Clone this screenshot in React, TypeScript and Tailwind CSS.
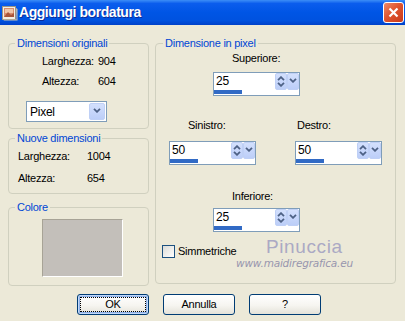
import React from "react";

function Chevron({ up = false }: { up?: boolean }) {
  return (
    <svg width="8" height="5" viewBox="0 0 8 5" className="block">
      <path
        d={up ? "M1 4.2 L4 1.2 L7 4.2" : "M1 0.8 L4 3.8 L7 0.8"}
        fill="none"
        stroke="#4D6185"
        strokeWidth="1.8"
      />
    </svg>
  );
}

function ArrowButton({ double = false, className = "" }: { double?: boolean; className?: string }) {
  return (
    <div
      className={`flex flex-col items-center rounded-[2px] border border-[#BFD0F6] bg-[linear-gradient(180deg,#D3E0FD_0%,#BCCEF8_100%)] ${
        double ? "justify-between py-[2px]" : "justify-center pb-[2px]"
      } ${className}`}
    >
      {double ? (
        <>
          <Chevron up />
          <Chevron />
        </>
      ) : (
        <Chevron />
      )}
    </div>
  );
}

function SpinField({ value }: { value: string }) {
  return (
    <div className="flex h-[24px] w-[87px] flex-col border border-[#7F9DB9] bg-white">
      <div className="flex h-[17px]">
        <span className="flex-1 pl-[2px] text-[12px] leading-[17px]">{value}</span>
        <ArrowButton double className="h-[17px] w-[12px]" />
        <ArrowButton className="h-[17px] w-[12px]" />
      </div>
      <div className="h-[5px]">
        <div className="h-[4px] w-[28px] bg-[#316AC5]" />
      </div>
    </div>
  );
}

function XpButton({ label, isDefault = false }: { label: string; isDefault?: boolean }) {
  return (
    <button
      type="button"
      className={`h-[21px] w-[72px] rounded-[3px] border border-[#003C74] bg-[linear-gradient(180deg,#FFFFFF_0%,#F6F5F0_55%,#E4E2D9_100%)] text-[11px] leading-[19px] ${
        isDefault
          ? "shadow-[inset_0_0_0_1px_#C2D8F8,inset_0_0_0_2px_#8DB0E8] outline-1 outline-offset-[-4px] outline-dotted outline-black"
          : ""
      }`}
    >
      {label}
    </button>
  );
}

const groupBox = "rounded-[4px] border border-[#D0D0BF]";
const legendText = "px-[2px] leading-[13px] text-[#0046D5]";

export default function App() {
  return (
    <div className="relative h-[321px] w-[405px] overflow-hidden bg-[#ECE9D8] font-['Liberation_Sans',Arial,sans-serif] text-[11px] tracking-[-0.25px] text-black">
      {/* title bar */}
      <div className="flex h-[25px] items-center bg-[linear-gradient(180deg,#3C8EF7_0%,#0B5DED_14%,#0055E5_50%,#0052DF_82%,#0041C9_100%)] pl-[2px] pr-[1px]">
        <svg width="16" height="16" viewBox="0 0 16 16" className="shrink-0">
          <rect x="0.5" y="1.5" width="13" height="13" fill="#F2EEE4" stroke="#9C9484" />
          <rect x="2" y="3" width="10" height="9" fill="#D98C6C" />
          <rect x="3" y="4" width="8" height="4" fill="#F0C6A8" />
          <path d="M2 12 L6 7 L9 10 L12 8 L12 12 Z" fill="#A9553A" />
          <path d="M14 3 L15.5 4 L15.5 15.5 L2 15.5 L1 14.5 L14.5 14.5 Z" fill="#C8C2B4" />
        </svg>
        <span className="ml-[1px] flex-1 text-[14px] font-bold tracking-[-0.45px] text-white [text-shadow:1px_1px_0_#0A2C9A]">
          Aggiungi bordatura
        </span>
        <div className="flex h-[21px] w-[21px] items-center justify-center rounded-[3px] border border-white bg-[linear-gradient(135deg,#EE8A6A_0%,#E0552F_45%,#C8391A_100%)]">
          <svg width="11" height="11" viewBox="0 0 11 11">
            <path d="M1.5 1.5 L9.5 9.5 M9.5 1.5 L1.5 9.5" stroke="white" strokeWidth="2.2" />
          </svg>
        </div>
      </div>

      {/* body */}
      <div className="flex pl-[8px] pt-[12px]">
        <div className="flex w-[141px] flex-col">
          <fieldset className={`${groupBox} h-[92px]`}>
            <legend className={`ml-[6px] ${legendText}`}>Dimensioni originali</legend>
            <div className="mt-[5px] pl-[33px]">
              <div className="flex h-[20px] leading-[13px]">
                <span className="w-[56px]">Larghezza:</span>
                <span>904</span>
              </div>
              <div className="flex h-[20px] leading-[13px]">
                <span className="w-[56px]">Altezza:</span>
                <span>604</span>
              </div>
            </div>
            <div className="ml-[17px] mt-[6px] flex h-[21px] w-[81px] items-center border border-[#7F9DB9] bg-white pr-[1px]">
              <span className="flex-1 pl-[3px] text-[12px]">Pixel</span>
              <ArrowButton className="h-[17px] w-[16px]" />
            </div>
          </fieldset>

          <fieldset className={`${groupBox} mt-[3px] h-[62px]`}>
            <legend className={`ml-[6px] ${legendText}`}>Nuove dimensioni</legend>
            <div className="mt-[5px] pl-[9px]">
              <div className="flex h-[22px] leading-[13px]">
                <span className="w-[69px]">Larghezza:</span>
                <span>1004</span>
              </div>
              <div className="flex h-[22px] leading-[13px]">
                <span className="w-[69px]">Altezza:</span>
                <span>654</span>
              </div>
            </div>
          </fieldset>

          <fieldset className={`${groupBox} mt-[7px] h-[85px]`}>
            <legend className={`ml-[6px] ${legendText}`}>Colore</legend>
            <div className="ml-[33px] mt-[5px] h-[58px] w-[81px] border border-b-white border-l-[#A7A396] border-r-white border-t-[#A7A396] bg-[#C3BFBA]" />
          </fieldset>
        </div>

        <fieldset className={`${groupBox} ml-[6px] h-[247px] w-[241px]`}>
          <legend className={`ml-[7px] ${legendText}`}>Dimensione in pixel</legend>
          <div className="ml-[76px] mt-[2px] leading-[13px]">Superiore:</div>
          <div className="ml-[57px] mt-[7px]">
            <SpinField value="25" />
          </div>

          <div className="ml-[13px] mt-[23px] flex gap-[39px]">
            <div className="flex flex-col">
              <span className="ml-[19px] leading-[13px]">Sinistro:</span>
              <div className="mt-[9px]">
                <SpinField value="50" />
              </div>
            </div>
            <div className="flex flex-col">
              <span className="ml-[2px] leading-[13px]">Destro:</span>
              <div className="mt-[9px]">
                <SpinField value="50" />
              </div>
            </div>
          </div>

          <div className="ml-[76px] mt-[25px] leading-[13px]">Inferiore:</div>
          <div className="ml-[57px] mt-[5px]">
            <SpinField value="25" />
          </div>

          <label className="ml-[6px] mt-[13px] flex items-center gap-[3px]">
            <span className="h-[13px] w-[13px] border border-[#1C5180] bg-[linear-gradient(135deg,#DCDCD7_0%,#FFFFFF_100%)]" />
            <span className="leading-[13px]">Simmetriche</span>
          </label>
        </fieldset>
      </div>

      {/* buttons */}
      <div className="mt-[8px] flex gap-[14px] pl-[77px]">
        <XpButton label="OK" isDefault />
        <XpButton label="Annulla" />
        <XpButton label="?" />
      </div>

      {/* watermark */}
      <div className="absolute left-[266px] top-[233px] text-[19px] tracking-[0.6px] text-[#ABA9C4]">
        Pinuccia
      </div>
      <div className="absolute left-[236px] top-[256px] font-['DejaVu_Sans',sans-serif] text-[10.5px] italic tracking-[-0.2px] text-[#9896AE]">
        www.maidiregrafica.eu
      </div>
    </div>
  );
}
